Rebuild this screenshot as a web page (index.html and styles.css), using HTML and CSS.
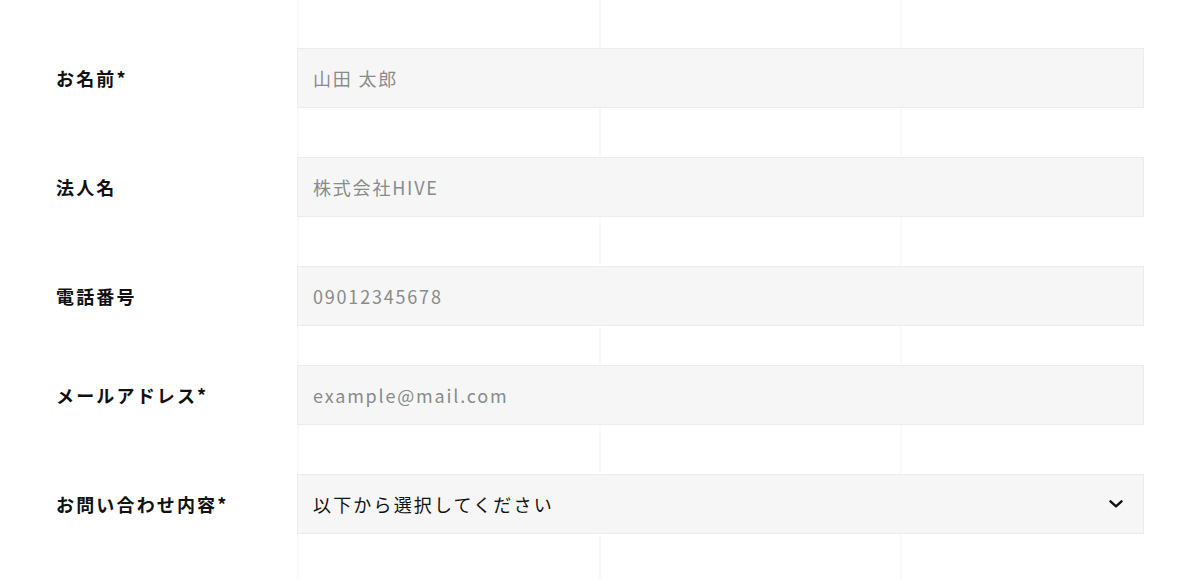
FILE: index.html
```html
<!DOCTYPE html>
<html lang="ja">
<head>
<meta charset="utf-8">
<title>お問い合わせ</title>
<link rel="stylesheet" href="styles.css">
</head>
<body>
<form class="form">
  <div class="row">
    <label class="label" for="name">お名前*</label>
    <input class="field" id="name" type="text" placeholder="山田 太郎">
  </div>
  <div class="row">
    <label class="label" for="company">法人名</label>
    <input class="field" id="company" type="text" placeholder="株式会社HIVE">
  </div>
  <div class="row row--tight">
    <label class="label" for="tel">電話番号</label>
    <input class="field" id="tel" type="tel" placeholder="09012345678">
  </div>
  <div class="row">
    <label class="label" for="mail">メールアドレス*</label>
    <input class="field" id="mail" type="email" placeholder="example@mail.com">
  </div>
  <div class="row">
    <label class="label" for="kind">お問い合わせ内容*</label>
    <div class="select-wrap">
      <select class="field field--select" id="kind">
        <option>以下から選択してください</option>
      </select>
      <svg class="chevron" width="14" height="8" viewBox="0 0 14 8" aria-hidden="true">
        <path d="M1.5 1.3 L7 6.3 L12.5 1.3" fill="none" stroke="#111" stroke-width="2.4" stroke-linecap="round" stroke-linejoin="round"/>
      </svg>
    </div>
  </div>
</form>
</body>
</html>
```
FILE: styles.css
```css
* { box-sizing: border-box; }

html, body {
  margin: 0;
  height: 100%;
}

body {
  font-family: "Noto Sans CJK JP", "Noto Sans", sans-serif;
  color: #111;
  background-color: #fff;
  background-image:
    linear-gradient(#f9f9f9, #f9f9f9),
    linear-gradient(#f9f9f9, #f9f9f9),
    linear-gradient(#f9f9f9, #f9f9f9);
  background-size: 2px 100%, 2px 100%, 2px 100%;
  background-position: 297px 0, 599px 0, 900px 0;
  background-repeat: no-repeat;
}

.form {
  padding: 48px 56px 0 56px;
}

.row {
  display: flex;
  align-items: center;
  margin-bottom: 49px;
}

.row--tight {
  margin-bottom: 39px;
}

.label {
  width: 241px;
  flex: none;
  font-size: 18px;
  font-weight: 700;
  letter-spacing: 0.12em;
  color: #111;
}

.field {
  display: block;
  width: 847px;
  height: 60px;
  margin: 0;
  padding: 0 15px;
  border: 1px solid #ececec;
  border-radius: 0;
  background: #f6f6f6;
  font-family: "Noto Sans CJK JP", "Noto Sans", sans-serif;
  font-size: 18px;
  letter-spacing: 0.1em;
  color: #111;
  outline: none;
  -webkit-appearance: none;
  appearance: none;
}

.field::placeholder {
  color: #8a8a8a;
  opacity: 1;
}

.select-wrap {
  position: relative;
  width: 847px;
}

.field--select {
  color: #111;
  letter-spacing: 0.12em;
}

.chevron {
  position: absolute;
  right: 21px;
  top: 26px;
  pointer-events: none;
}
```
